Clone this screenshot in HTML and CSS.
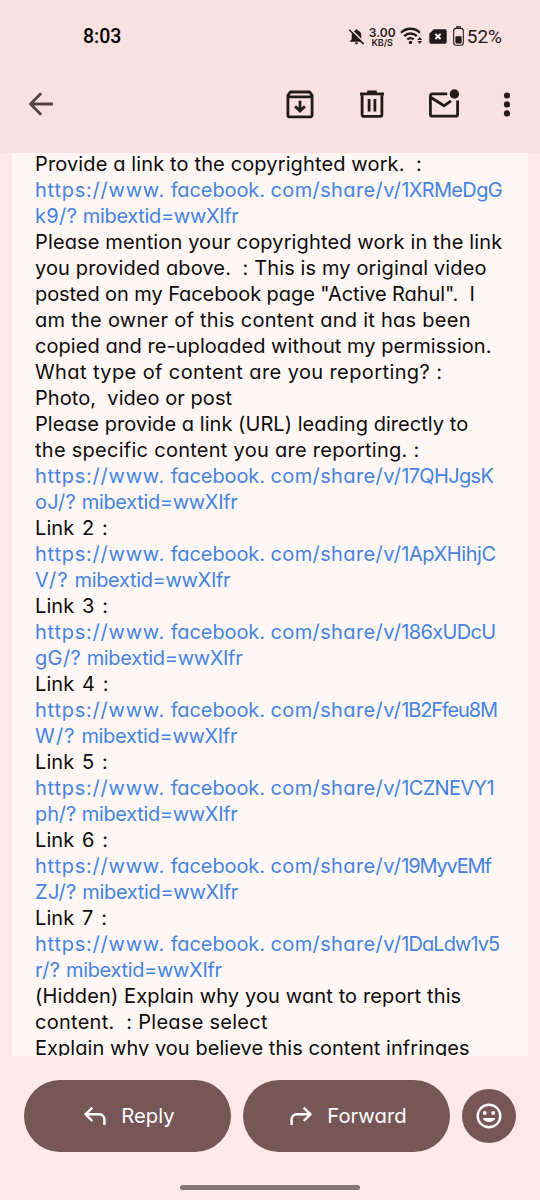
FILE: index.html
```
<!DOCTYPE html>
<html lang="en">
  <head>
    <meta charset="UTF-8" />
    <meta name="viewport" content="width=device-width, initial-scale=1.0" />
    <title>Mail</title>
    <link rel="stylesheet" href="styles.css">
  </head>
  <body>
    <header>
      <div class="status-bar">
        <span class="time">8:03</span>
        <div class="status-icons">
          <svg class="bell" width="17" height="17" viewBox="0 0 17 17">
            <path d="M8.5 1.2a1.2 1.2 0 0 1 1.2 1.2c2.4.6 3.6 2.4 3.6 4.8v4l1.7 1.7v.8H2v-.8l1.7-1.7v-4c0-2.4 1.2-4.2 3.6-4.8a1.2 1.2 0 0 1 1.2-1.2zM6.8 14.5h3.4a1.7 1.7 0 0 1-3.4 0z" fill="#231a1b" />
            <path d="M2.1 .6l14 14" stroke="#fae1e1" stroke-width="1.6" />
            <path d="M1.2 1.7l14.4 14.4" stroke="#231a1b" stroke-width="1.5" />
          </svg>
          <div class="speed"><b>3.00</b><small>KB/S</small></div>
          <svg class="wifi" width="23" height="18" viewBox="0 0 23 18">
            <g fill="none" stroke="#231a1b" stroke-width="2.3">
              <path d="M1 5.7a13.4 13.4 0 0 1 19 0" />
              <path d="M4.2 9.1a8.9 8.9 0 0 1 12.6 0" />
              <path d="M7.3 12.4a4.5 4.5 0 0 1 6.4 0" />
            </g>
            <circle cx="10.5" cy="15.4" r="1.7" fill="#231a1b" />
            <path d="M19.7 10l2.4 3h-4.8zM19.7 17l2.4-3h-4.8z" fill="#231a1b" />
          </svg>
          <svg class="sim" width="18" height="15" viewBox="0 0 18 15">
            <path d="M4.8 .3H16a1.7 1.7 0 0 1 1.7 1.7v11a1.7 1.7 0 0 1-1.7 1.7H2A1.7 1.7 0 0 1 .3 13V4.8z" fill="#231a1b" />
            <path d="M6.4 4.8l5.2 5.2M11.6 4.8L6.4 10" stroke="#fff" stroke-width="1.8" />
          </svg>
          <svg class="battery" width="11" height="20" viewBox="0 0 11 20">
            <path d="M3 .9h5" stroke="#231a1b" stroke-width="1.4" />
            <rect x=".7" y="2.4" width="9.6" height="16.8" rx="2.4" fill="none" stroke="#231a1b" stroke-width="1.1" />
            <rect x="2.4" y="10.2" width="6.2" height="7.2" rx=".8" fill="#231a1b" />
          </svg>
          <span class="percent">52%</span>
        </div>
      </div>

      <div class="toolbar">
        <svg class="back" width="36" height="36" viewBox="0 0 36 36">
          <path d="M30 18H7.5M18.2 7.3L7.5 18l10.7 10.7" fill="none" stroke="#534344" stroke-width="2.8" stroke-linejoin="round" />
        </svg>
        <div class="actions">
          <svg width="36" height="36" viewBox="0 0 36 36" fill="none" stroke="#231a1b" stroke-width="2.8">
            <path d="M5.9 9.3L8.4 6h19.2l2.5 3.3v20a1.5 1.5 0 0 1-1.5 1.5H7.4a1.5 1.5 0 0 1-1.5-1.5zM6 10.8h24" stroke-linejoin="round" />
            <path d="M18 14.7v10M13.1 20.2l4.9 4.9 4.9-4.9" />
          </svg>
          <svg width="36" height="36" viewBox="0 0 36 36" fill="none" stroke="#231a1b" stroke-width="2.8">
            <path d="M6 7.9h24M13.2 6h9.6" />
            <path d="M8.1 8v20.8a1.6 1.6 0 0 0 1.6 1.6h16.6a1.6 1.6 0 0 0 1.6-1.6V8M15.1 13v12.6M20.9 13v12.6" />
          </svg>
          <svg width="36" height="36" viewBox="0 0 36 36">
            <path d="M21.2 7.9H6.4a2 2 0 0 0-2 2v18.3a2 2 0 0 0 2 2h23.2a2 2 0 0 0 2-2V14.6M4.6 11.2L18 19.8l7-4.9" fill="none" stroke="#231a1b" stroke-width="2.8" />
            <circle cx="28.4" cy="8" r="4.7" fill="#231a1b" />
          </svg>
          <svg class="more" width="8" height="36" viewBox="0 0 8 36" fill="#231a1b">
            <circle cx="4" cy="9.5" r="3.1" />
            <circle cx="4" cy="18.4" r="3.1" />
            <circle cx="4" cy="27.4" r="3.1" />
          </svg>
        </div>
      </div>
    </header>

    <main>
      <p>Provide a link to the copyrighted work. &nbsp;:</p>
      <a href="#"><span class="scheme">https://www.</span> <span class="host">facebook.</span> <span class="path">com/share/v/</span><span class="id">1XRMeDgG</span><br><span class="rest">k9/?</span> <span class="query">mibextid=wwXIfr</span></a>
      <p>Please mention your copyrighted work in the link</p>
      <p>you provided above. &nbsp;: This is my original video</p>
      <p class="tight">posted on my Facebook page "Active Rahul". &nbsp;I</p>
      <p class="wide">am the owner of this content and it has been</p>
      <p class="snug">copied and re-uploaded without my permission.</p>
      <p class="wider">What type of content are you reporting? :</p>
      <p class="snug">Photo, &nbsp;video or post</p>
      <p class="snug">Please provide a link (URL) leading directly to</p>
      <p class="wide">the specific content you are reporting. :</p>
      <a href="#"><span class="scheme">https://www.</span> <span class="host">facebook.</span> <span class="path">com/share/v/</span><span class="id">17QHJgsK</span><br><span class="rest">oJ/?</span> <span class="query">mibextid=wwXIfr</span></a>
      <p class="label">Link 2 :</p>
      <a href="#"><span class="scheme">https://www.</span> <span class="host">facebook.</span> <span class="path">com/share/v/</span><span class="id id-wide">1ApXHihjC</span><br><span class="rest rest-wide">V/?</span> <span class="query">mibextid=wwXIfr</span></a>
      <p class="label">Link 3 :</p>
      <a href="#"><span class="scheme">https://www.</span> <span class="host">facebook.</span> <span class="path">com/share/v/</span><span class="id">186xUDcU</span><br><span class="rest">gG/?</span> <span class="query">mibextid=wwXIfr</span></a>
      <p class="label">Link 4 :</p>
      <a href="#"><span class="scheme">https://www.</span> <span class="host">facebook.</span> <span class="path">com/share/v/</span><span class="id id-tight">1B2Ffeu8M</span><br><span class="rest rest-wide">W/?</span> <span class="query">mibextid=wwXIfr</span></a>
      <p class="label">Link 5 :</p>
      <a href="#"><span class="scheme">https://www.</span> <span class="host">facebook.</span> <span class="path">com/share/v/</span><span class="id">1CZNEVY1</span><br><span class="rest rest-tight">ph/?</span> <span class="query">mibextid=wwXIfr</span></a>
      <p class="label">Link 6 :</p>
      <a href="#"><span class="scheme">https://www.</span> <span class="host">facebook.</span> <span class="path">com/share/v/</span><span class="id id-tight">19MyvEMf</span><br><span class="rest">ZJ/?</span> <span class="query">mibextid=wwXIfr</span></a>
      <p class="label">Link 7 :</p>
      <a href="#"><span class="scheme">https://www.</span> <span class="host">facebook.</span> <span class="path">com/share/v/</span><span class="id id-snug">1DaLdw1v5</span><br><span class="rest">r/?</span> <span class="query">mibextid=wwXIfr</span></a>
      <p>(Hidden) Explain why you want to report this</p>
      <p class="wide">content. &nbsp;: Please select</p>
      <p class="snug">Explain why you believe this content infringes</p>
    </main>

    <footer>
      <div class="buttons">
        <button class="pill">
          <svg width="24" height="24" viewBox="0 0 24 24">
            <path d="M9.3 3.6L2.6 10.3l6.7 6.7M2.8 10.3h13.6a5 5 0 0 1 5 5V21" fill="none" stroke="#fff" stroke-width="2.4" />
          </svg>
          <span>Reply</span>
        </button>
        <button class="pill">
          <svg width="24" height="24" viewBox="0 0 24 24">
            <path d="M14.7 3.6l6.7 6.7-6.7 6.7M21.2 10.3H7.6a5 5 0 0 0-5 5V21" fill="none" stroke="#fff" stroke-width="2.4" />
          </svg>
          <span>Forward</span>
        </button>
        <button class="emoji">
          <svg width="28" height="28" viewBox="0 0 28 28">
            <circle cx="14" cy="14" r="11.3" fill="none" stroke="#fff" stroke-width="2.4" />
            <circle cx="9.8" cy="11" r="1.9" fill="#fff" />
            <circle cx="18.2" cy="11" r="1.9" fill="#fff" />
            <path d="M7.6 16h12.8a6.8 6.2 0 0 1-12.8 0z" fill="#fff" />
          </svg>
        </button>
      </div>
      <div class="handle"></div>
    </footer>
  </body>
</html>
```
FILE: styles.css
```
* {
  margin: 0;
  padding: 0;
  box-sizing: border-box;
}

:root {
  --bar-color: #fae1e1;
  --page-color: #fee8e8;
  --sheet-color: #fff7f5;
  --button-color: #775657;
  --link-color: #4483e0;
  --icon-color: #231a1b;
}

body {
  height: 1200px;
  display: flex;
  flex-direction: column;
  background: var(--page-color);
  font-family: Inter, sans-serif;
  font-feature-settings: "cv11";
  overflow: hidden;
}

svg {
  display: block;
  flex: none;
}

header {
  height: 153px;
  background: var(--bar-color);
}

.status-bar {
  height: 74px;
  padding: 0 38px 0 83px;
  display: flex;
  align-items: center;
  justify-content: space-between;
  font-family: Roboto, sans-serif;
  color: #000;
}

.time {
  padding-bottom: 1px;
  font-size: 19.5px;
  font-weight: 500;
}

.status-icons {
  display: flex;
  align-items: center;
  color: var(--icon-color);
}

.bell {
  margin-bottom: 1px;
}

.speed {
  width: 27px;
  margin: 0 4px;
  display: flex;
  flex-direction: column;
  align-items: center;
  font-family: Inter, sans-serif;
}

.speed b {
  font-size: 12px;
  font-weight: 600;
  line-height: 10px;
}

.speed small {
  font-size: 9px;
  font-weight: 600;
  line-height: 9px;
}

.wifi,
.battery {
  margin-bottom: 2px;
}

.sim {
  margin: 0 6px 2px;
}

.percent {
  margin-left: 3px;
  padding-bottom: 1px;
  font-size: 19px;
}

.toolbar {
  height: 60px;
  padding: 0 29px 0 23px;
  display: flex;
  align-items: center;
  justify-content: space-between;
}

.actions {
  display: flex;
  gap: 36px;
}

.more {
  margin-left: 5px;
}

main {
  height: 903px;
  margin: 0 12px;
  padding-left: 23px;
  background: var(--sheet-color);
  font-size: 20px;
  line-height: 26px;
  color: #0d0b0b;
  white-space: nowrap;
  overflow: hidden;
}

main p:first-child {
  margin-top: -2px;
}

main a {
  display: block;
  color: var(--link-color);
  text-decoration: none;
}

p {
  letter-spacing: 0.13px;
}

.snug {
  letter-spacing: 0.05px;
}

.tight {
  letter-spacing: -0.08px;
}

.wide {
  letter-spacing: 0.27px;
}

.wider {
  letter-spacing: 0.4px;
}

.label {
  letter-spacing: 0.1px;
  word-spacing: 2px;
}

.scheme {
  letter-spacing: 0.77px;
}

.host {
  letter-spacing: -0.1px;
}

.path {
  letter-spacing: 0.38px;
}

.id {
  letter-spacing: -0.65px;
}

.id-wide {
  letter-spacing: -0.42px;
}

.id-snug {
  letter-spacing: -0.92px;
}

.id-tight {
  letter-spacing: -1.15px;
}

.rest {
  letter-spacing: 0.35px;
}

.rest-wide {
  letter-spacing: 1.2px;
}

.rest-tight {
  letter-spacing: -0.1px;
}

.query {
  letter-spacing: -0.33px;
}

footer {
  flex: 1;
  padding: 24px 24px 0;
}

.buttons {
  display: flex;
  align-items: center;
  gap: 12px;
}

button {
  border: none;
  background: var(--button-color);
  color: #fff;
  font: inherit;
}

.pill {
  width: 207px;
  height: 72px;
  padding-left: 3px;
  border-radius: 36px;
  display: flex;
  align-items: center;
  justify-content: center;
  gap: 14px;
  font-size: 20.3px;
}

.pill span {
  padding-bottom: 2px;
}

.emoji {
  width: 54px;
  height: 54px;
  border-radius: 50%;
  display: flex;
  align-items: center;
  justify-content: center;
}

.handle {
  width: 180px;
  height: 5px;
  margin: 33px auto 0;
  border-radius: 3px;
  background: #877573;
}
```
